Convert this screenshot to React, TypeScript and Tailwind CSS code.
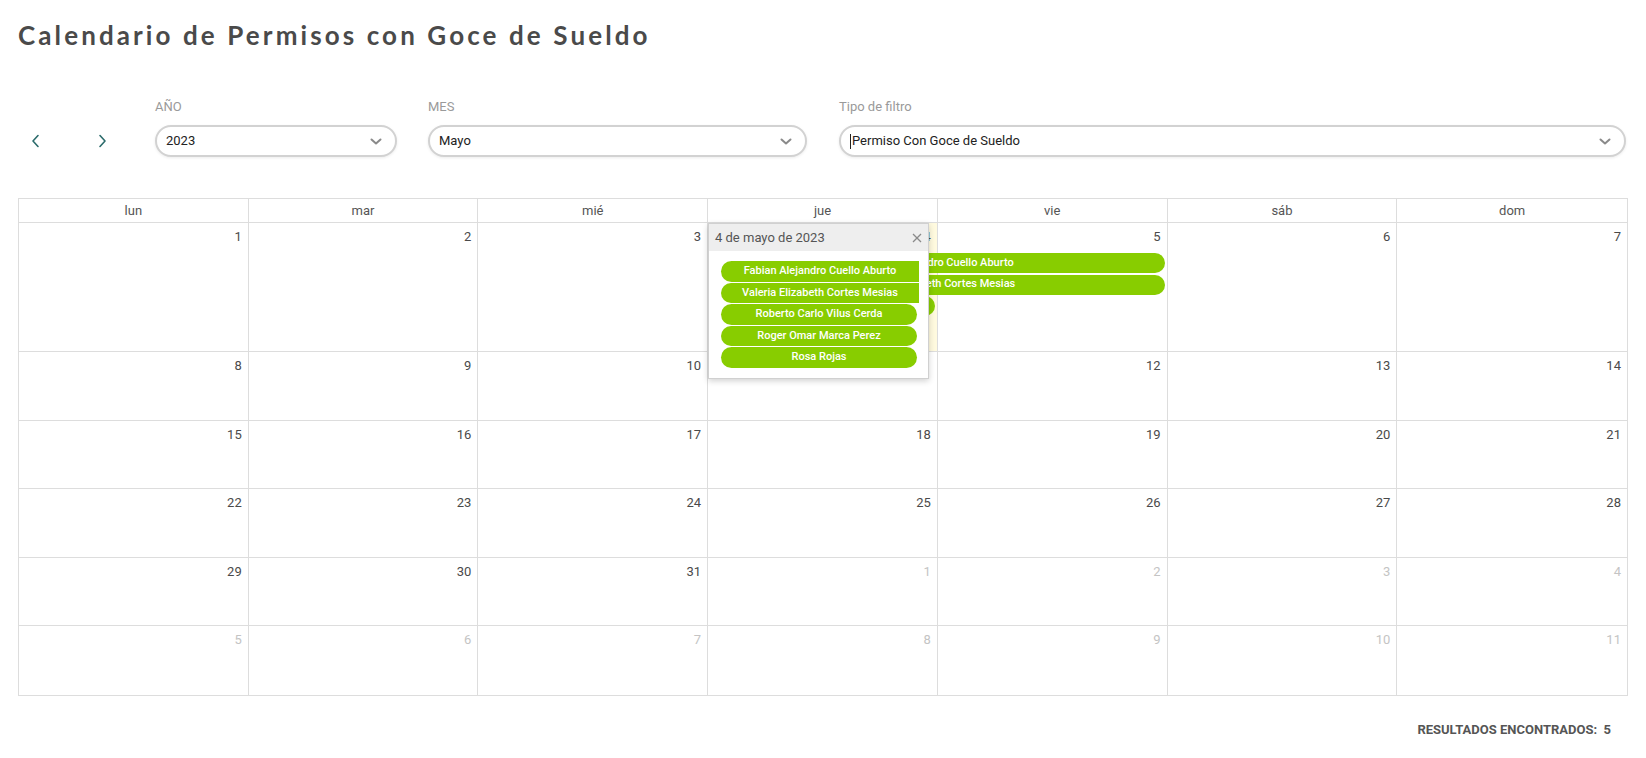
import React from 'react';

type Day = { n: number; muted?: boolean; today?: boolean; link?: boolean };
type Ev = { title: string; col: number; span: number; row: number };

const COL_START = ['col-start-1', 'col-start-2', 'col-start-3', 'col-start-4', 'col-start-5', 'col-start-6', 'col-start-7'];
const COL_SPAN = ['col-span-1', 'col-span-2'];
const ROW_START = ['row-start-1', 'row-start-2', 'row-start-3', 'row-start-4'];

const HEADERS = ['lun', 'mar', 'mié', 'jue', 'vie', 'sáb', 'dom'];

const WEEKS: Day[][] = [
    [1, 2, 3, 4, 5, 6, 7].map((n) => ({ n, today: n === 4 })),
    [8, 9, 10, 11, 12, 13, 14].map((n) => ({ n, link: n === 11 })),
    [15, 16, 17, 18, 19, 20, 21].map((n) => ({ n })),
    [22, 23, 24, 25, 26, 27, 28].map((n) => ({ n })),
    [
        { n: 29 },
        { n: 30 },
        { n: 31 },
        { n: 1, muted: true },
        { n: 2, muted: true },
        { n: 3, muted: true },
        { n: 4, muted: true },
    ],
    [5, 6, 7, 8, 9, 10, 11].map((n) => ({ n, muted: true })),
];

const WEEK1_EVENTS: Ev[] = [
    { title: 'Fabian Alejandro Cuello Aburto', col: 3, span: 2, row: 1 },
    { title: 'Valeria Elizabeth Cortes Mesias', col: 3, span: 2, row: 2 },
    { title: 'Roberto Carlo Vilus Cerda', col: 3, span: 1, row: 3 },
];

const POPOVER_EVENTS = [
    { title: 'Fabian Alejandro Cuello Aburto', cont: true },
    { title: 'Valeria Elizabeth Cortes Mesias', cont: true },
    { title: 'Roberto Carlo Vilus Cerda', cont: false },
    { title: 'Roger Omar Marca Perez', cont: false },
    { title: 'Rosa Rojas', cont: false },
];

const Chevron = ({ dir }: { dir: 'left' | 'right' }) => (
    <svg width="9" height="14" viewBox="0 0 9 14" fill="none">
        <polyline
            points={dir === 'left' ? '7,1.5 2,7 7,12.5' : '2,1.5 7,7 2,12.5'}
            stroke="#2b6b6b"
            strokeWidth="1.6"
            strokeLinecap="round"
            strokeLinejoin="round"
        />
    </svg>
);

const SelectBox = ({ label, value, width, caret }: { label: string; value: string; width: string; caret?: boolean }) => (
    <div className={`flex flex-col ${width}`}>
        <span className="text-[13px] leading-[16px] text-[#9a9a9a]">{label}</span>
        <div className="mt-[10px] flex h-[32px] items-center justify-between rounded-full border-2 border-[#d2d2d2] bg-white pl-[9px] pr-[13px] shadow-[0_1px_3px_rgba(0,0,0,0.08)]">
            <span className="flex items-center text-[13px] text-[#222]">
                {caret && <span className="mr-[1px] inline-block h-[15px] w-px bg-[#222]" />}
                {value}
            </span>
            <svg width="12" height="7" viewBox="0 0 12 7" fill="none">
                <polyline points="1.5,1.5 6,5.5 10.5,1.5" stroke="#8a8a8a" strokeWidth="2" strokeLinecap="round" strokeLinejoin="round" />
            </svg>
        </div>
    </div>
);

const DayCell = ({ day, i, full }: { day: Day; i: number; full?: boolean }) => (
    <div
        className={`${COL_START[i]} ${full ? 'row-span-full' : ''} ${i < 6 ? 'border-r border-[#dddddd]' : ''} ${day.today ? 'bg-[#fffadf]' : ''} flex justify-end px-[6px] pt-[6px]`}
    >
        <span
            className={`text-[13px] leading-[16px] ${day.muted ? 'text-[#c4c4c4]' : day.link ? 'text-[#8cc9e6]' : 'text-[#4a4a4a]'}`}
        >
            {day.n}
        </span>
    </div>
);

const App: React.FC = () => {
    return (
        <div className="min-h-screen bg-white px-[18px] pt-[19px] font-['Roboto',sans-serif] text-[#444]">
            <h1 className="font-['Lato',sans-serif] text-[26px] font-bold leading-[32px] tracking-[3.1px] text-[#4a4a4a]">
                Calendario de Permisos con Goce de Sueldo
            </h1>

            <div className="mt-[48px] flex items-end">
                <div className="flex h-[32px] w-[137px] items-center">
                    <button className="ml-[12px] flex h-[20px] w-[10px] items-center justify-center">
                        <Chevron dir="left" />
                    </button>
                    <button className="ml-[57px] flex h-[20px] w-[10px] items-center justify-center">
                        <Chevron dir="right" />
                    </button>
                </div>
                <SelectBox label="AÑO" value="2023" width="w-[242px]" />
                <div className="w-[31px]" />
                <SelectBox label="MES" value="Mayo" width="w-[379px]" />
                <div className="w-[32px]" />
                <SelectBox label="Tipo de filtro" value="Permiso Con Goce de Sueldo" width="w-[787px]" caret />
            </div>

            <div className="relative mt-[41px] border border-[#dddddd]">
                <div className="grid h-[24px] grid-cols-7 border-b border-[#dddddd]">
                    {HEADERS.map((h, i) => (
                        <div
                            key={h}
                            className={`flex items-center justify-center text-[13px] text-[#555] ${i < 6 ? 'border-r border-[#dddddd]' : ''}`}
                        >
                            {h}
                        </div>
                    ))}
                </div>

                {WEEKS.map((week, w) =>
                    w === 0 ? (
                        <div key={w} className="grid h-[129px] grid-cols-7 grid-rows-[30px_21.5px_21.5px_21.5px_1fr] border-b border-[#dddddd]">
                            {week.map((d, i) => (
                                <DayCell key={i} day={d} i={i} full />
                            ))}
                            {WEEK1_EVENTS.map((ev) => (
                                <div
                                    key={ev.title}
                                    className={`${COL_START[ev.col]} ${COL_SPAN[ev.span - 1]} ${ROW_START[ev.row]} relative z-10 ml-[2px] mr-[3px] flex h-[20px] items-center justify-center rounded-full bg-[#88cd00] text-[11px] font-medium text-white`}
                                >
                                    {ev.title}
                                </div>
                            ))}
                        </div>
                    ) : (
                        <div key={w} className={`grid h-[68.5px] grid-cols-7 ${w < 5 ? 'border-b border-[#dddddd]' : ''}`}>
                            {week.map((d, i) => (
                                <DayCell key={i} day={d} i={i} />
                            ))}
                        </div>
                    )
                )}

                <div className="absolute left-[689px] top-[24px] z-20 w-[221px] border border-[#d0d0d0] bg-white shadow-[0_2px_6px_rgba(0,0,0,0.18)]">
                    <div className="flex h-[27px] items-center justify-between bg-[#eeeeee] pl-[6px] pr-[6px]">
                        <span className="text-[13px] text-[#555]">4 de mayo de 2023</span>
                        <svg width="10" height="10" viewBox="0 0 10 10" fill="none">
                            <line x1="1" y1="1" x2="9" y2="9" stroke="#8a8a8a" strokeWidth="1.3" />
                            <line x1="9" y1="1" x2="1" y2="9" stroke="#8a8a8a" strokeWidth="1.3" />
                        </svg>
                    </div>
                    <div className="flex flex-col gap-px pb-[10px] pl-[12px] pr-[9px] pt-[10px]">
                        {POPOVER_EVENTS.map((ev) => (
                            <div
                                key={ev.title}
                                className={`flex h-[20.5px] items-center justify-center bg-[#88cd00] text-[11px] font-medium text-white ${ev.cont ? 'rounded-l-full' : 'mr-[2px] rounded-full'}`}
                            >
                                {ev.title}
                            </div>
                        ))}
                    </div>
                </div>
            </div>

            <div className="mt-[26px] flex justify-end pr-[17px] text-[13px] font-bold leading-[16px] text-[#555]">
                RESULTADOS ENCONTRADOS:&nbsp;&nbsp;5
            </div>
        </div>
    );
};

export default App;
